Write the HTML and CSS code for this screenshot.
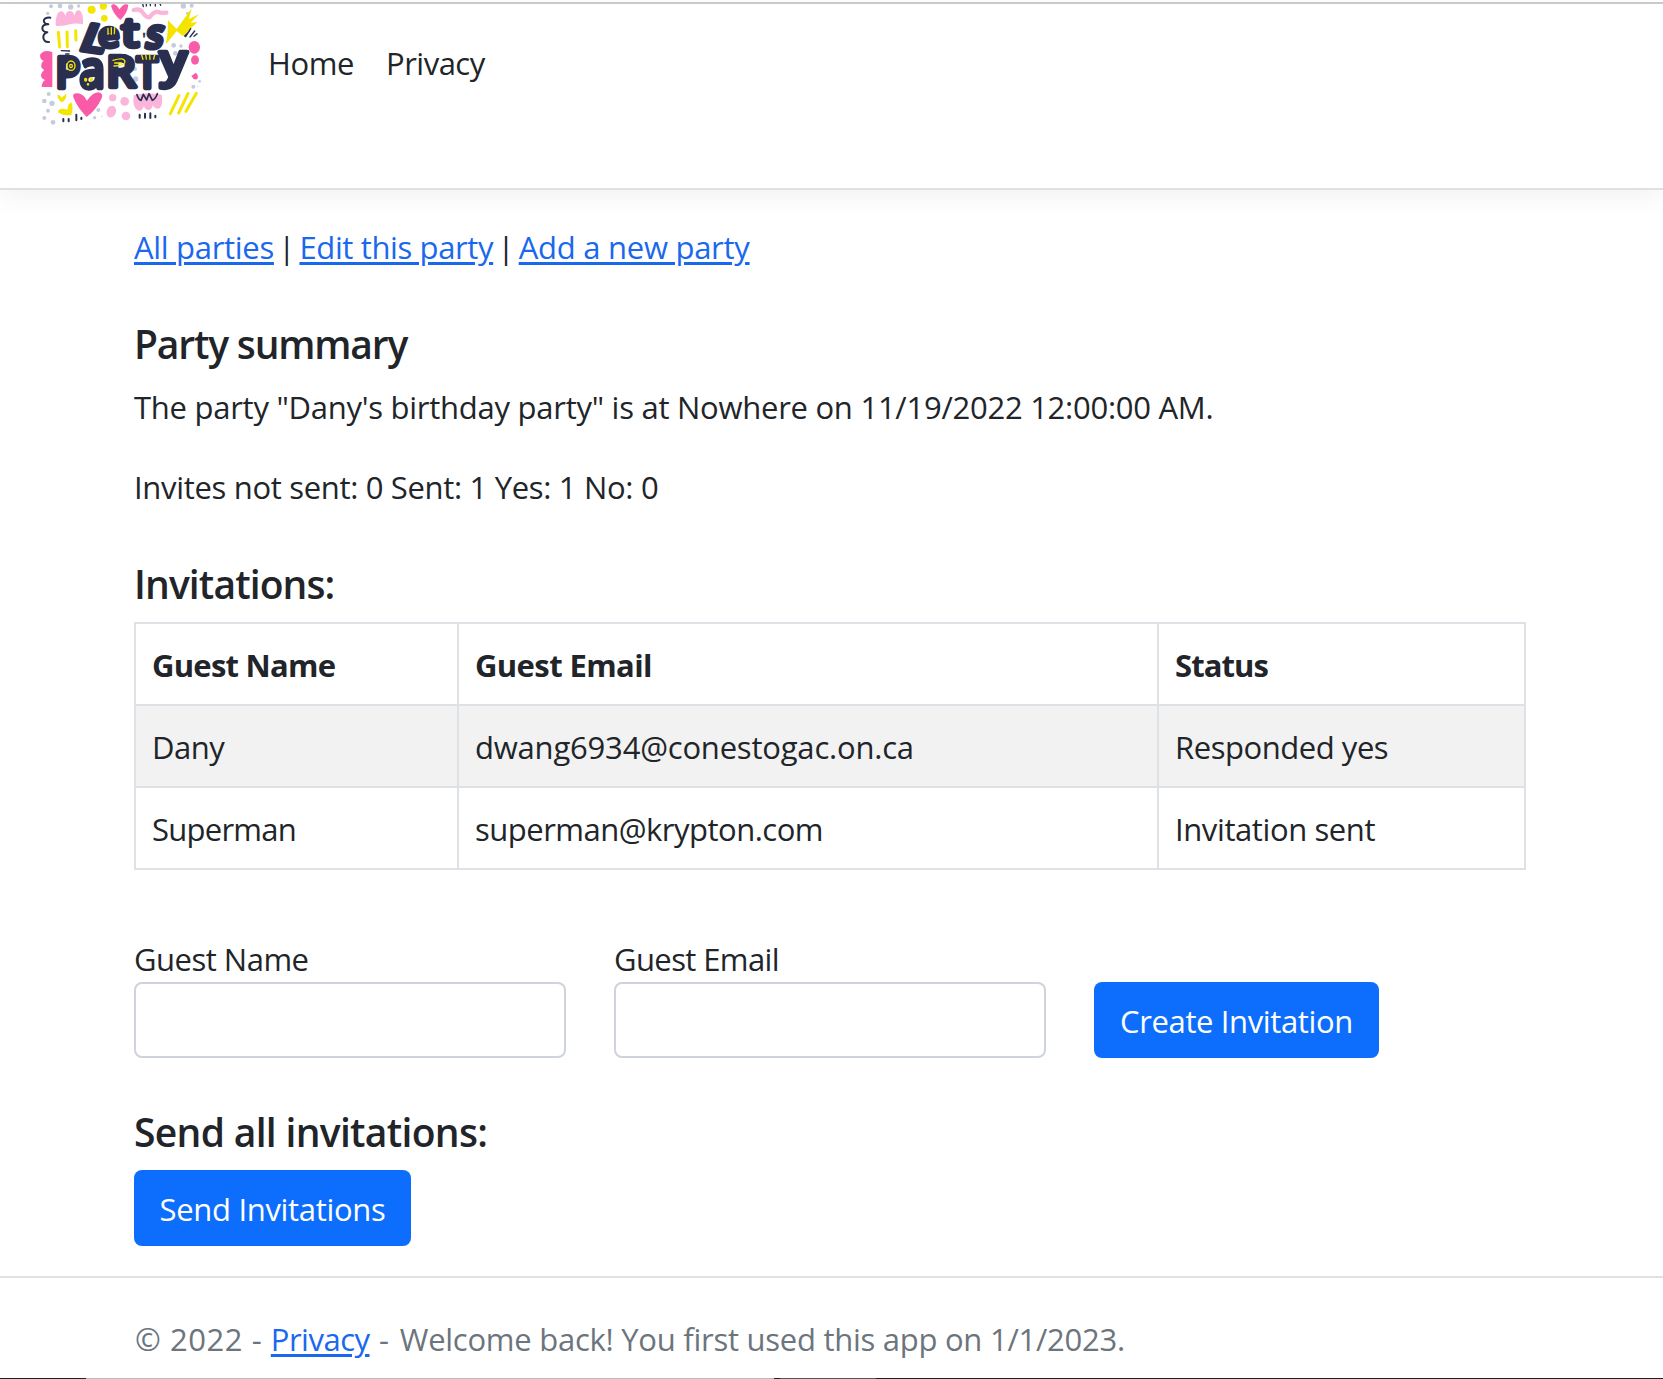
FILE: index.html
```html
<!DOCTYPE html>
<html lang="en">
<head>
<meta charset="utf-8">
<title>Party summary</title>
<link rel="stylesheet" href="styles.css">
</head>
<body>
<header class="navbar">
  <a class="brand" href="#" aria-label="Let's Party">
    <svg class="logo" viewBox="0 12 540 388" width="180" height="129.33">
      <g fill="#c3cbdc">
        <circle cx="63" cy="19" r="6"/><circle cx="90" cy="18" r="7"/><circle cx="122" cy="21" r="8"/><circle cx="146" cy="18" r="5"/><circle cx="53" cy="40" r="5"/>
        <circle cx="460" cy="18" r="8"/><circle cx="485" cy="17" r="6"/><circle cx="473" cy="40" r="5"/><circle cx="431" cy="136" r="7"/><circle cx="453" cy="138" r="5"/><circle cx="436" cy="160" r="7"/>
        <circle cx="315" cy="207" r="6"/><circle cx="297" cy="222" r="6"/><circle cx="317" cy="237" r="8"/><circle cx="509" cy="244" r="4"/><circle cx="490" cy="260" r="6"/><circle cx="503" cy="259" r="2"/>
        <circle cx="56" cy="282" r="6"/><circle cx="43" cy="303" r="7"/><circle cx="66" cy="310" r="8"/><circle cx="54" cy="332" r="6"/><circle cx="43" cy="354" r="6"/><circle cx="69" cy="367" r="7"/><circle cx="205" cy="330" r="6"/><circle cx="194" cy="353" r="5"/><circle cx="216" cy="349" r="2"/>
      </g>
      <g fill="#fcb5da">
        <path d="M77 77q-1-39 14-43 12-1 15 14 2-15 14-15 11 0 13 14 4-18 15-16 13 7 11 42-20-5-40 0-22 7-42 4z"/>
        <circle cx="248" cy="293" r="11"/><circle cx="284" cy="304" r="13"/><ellipse cx="244" cy="335" rx="14" ry="18" transform="rotate(20 244 335)"/><circle cx="288" cy="348" r="13"/>
        <path d="M311 286q42-12 84-2 6 43-14 42-9-1-12-10-5 16-15 14-10-2-12-13-5 17-18 15-18-9-13-46z"/>
      </g>
      <path fill="none" stroke="#fcb5da" stroke-width="13" stroke-linecap="round" stroke-linejoin="round" d="M311 30q18-5 26 6 10 17 22 16 10-15 22-17 12 5 28 3"/>
      <g fill="#fa5ba9">
        <path d="M243 17q11-12 25 11 13-20 27-14-2 25-24 46-21-18-28-43z"/>
        <path d="M67 157v104H35q0-14 10-21-13-5-12-15 0-8 10-15-11-5-9-16 0-7 7-11-14-6-10-20 13-17 36-6z"/>
        <path d="M131 294q-7-14 11-14 18 1 29 22 17-25 36-25 15 5 7 20-14 31-44 54-27-27-39-57z"/>
        <ellipse cx="493" cy="142" rx="17" ry="19"/><ellipse cx="495" cy="180" rx="12" ry="14"/><path d="M484 228l14-10q8 10 5 17-9 10-19-7z"/>
      </g>
      <g fill="#f3e500">
        <circle cx="185" cy="29" r="12"/><circle cx="220" cy="18" r="11"/><circle cx="223" cy="55" r="10"/>
        <path d="M414 61l26 26 45-62-8 32 30-14-25 25 20-2q-25 25-43 43l-19-16-32 40 5-38z"/>
        <path d="M82 283q10 4 13 10l14-12q1 18-14 26-13-9-13-24z"/><path d="M115 314l9-8q7 22 0 39-26 3-40-8 1-16 28-8z"/>
      </g>
      <g fill="none" stroke="#f3e500" stroke-width="9" stroke-linecap="round">
        <path d="M85 97l4 44M111 96l1 44M137 92l1 28M447 287l-26 54M474 281l-28 58M499 280l-31 54"/>
      </g>
      <g fill="none" stroke="#2a2f50" stroke-width="6" stroke-linecap="round" stroke-linejoin="round">
        <path d="M61 53c-28-2-22 21-6 20-25 0-22 24-3 24-19 6-14 31 5 29"/>
        <path stroke-width="4" d="M94 152l25 1M107 162h10M338 11l2 9M349 11v7M361 11v6M376 11v7M390 11l2 5M467 110l15-24M480 111l14-18M492 109l9-8M464 108l14-14"/>
        <path stroke-width="5" d="M321 284q4 14 12 17l7-18 10 17 7-19 10 20q10-5 15-20"/>
        <path d="M100 357v7M116 357v7M139 344v17M154 353v4M329 344v9M345 341v12M361 340v14M376 347v5"/>
      </g>
      <g class="lettering">
        <text transform="translate(142 149) rotate(8) skewX(-14)" font-size="116" textLength="76" lengthAdjust="spacingAndGlyphs">L</text>
        <text transform="translate(206 143) rotate(-4)" font-size="104" textLength="64" lengthAdjust="spacingAndGlyphs">e</text>
        <text x="274" y="142" font-size="118" textLength="54" lengthAdjust="spacingAndGlyphs">t</text>
        <text class="mark" x="336" y="136" font-size="50">'</text>
        <text transform="translate(342 145) skewX(-10)" font-size="120" textLength="54" lengthAdjust="spacingAndGlyphs">s</text>
        <text x="76" y="265" font-size="130" textLength="76" lengthAdjust="spacingAndGlyphs">P</text>
        <text x="148" y="264" font-size="158" textLength="78" lengthAdjust="spacingAndGlyphs">a</text>
        <text x="228" y="262" font-size="130" textLength="90" lengthAdjust="spacingAndGlyphs">R</text>
        <text x="319" y="265" font-size="128" textLength="66" lengthAdjust="spacingAndGlyphs">T</text>
        <text x="389" y="230" font-size="136" textLength="82" lengthAdjust="spacingAndGlyphs">y</text>
      </g>
      <g fill="none" stroke="#f3e500" stroke-width="4" stroke-linecap="round">
        <path d="M234 85v18M244 83v20M254 83l-1 18M335 165l4 13M347 164l2 13M359 165l1 13M374 165l-3 12M249 181q35-11 36 5-2 11-33 12M254 189h20"/>
        <ellipse cx="123" cy="197" rx="12" ry="14" fill="#2a2f50"/><ellipse cx="123" cy="198" rx="4" ry="5"/>
        <ellipse cx="167" cy="239" rx="3" ry="4" fill="#f3e500"/><ellipse cx="184" cy="238" rx="3" ry="4" fill="#f3e500"/><circle cx="174" cy="253" r="2"/>
      </g>
    </svg>
  </a>
  <nav class="nav-links"><a class="ls-40" href="#">Home</a><a class="ls-50" href="#">Privacy</a></nav>
</header>
<main class="container">
  <p class="actions"><a class="ls-30" href="#">All parties</a><span class="sep">|</span><a class="ls-37" href="#">Edit this party</a><span class="sep">|</span><a class="ls-25" href="#">Add a new party</a></p>
  <h5 class="h-summary">Party summary</h5>
  <p class="summary ls-25">The party "Dany's birthday party" is at Nowhere on 11/19/2022 12:00:00 AM.</p>
  <p class="counts ls-32">Invites not sent: 0 Sent: 1 Yes: 1 No: 0</p>
  <h5 class="h-invitations">Invitations:</h5>
  <table class="guests">
    <colgroup><col class="c-name"><col class="c-email"><col class="c-status"></colgroup>
    <thead><tr><th class="ls-75">Guest Name</th><th class="ls-60">Guest Email</th><th class="ls-90">Status</th></tr></thead>
    <tbody>
      <tr><td class="ls-50">Dany</td><td class="ls-20">dwang6934@conestogac.on.ca</td><td class="ls-45">Responded yes</td></tr>
      <tr><td class="ls-75">Superman</td><td class="ls-50">superman@krypton.com</td><td class="ls-40">Invitation sent</td></tr>
    </tbody>
  </table>
  <form class="invite">
    <div class="field"><label class="ls-50" for="guest-name">Guest Name</label><input id="guest-name" type="text"></div>
    <div class="field"><label class="ls-60" for="guest-email">Guest Email</label><input id="guest-email" type="text"></div>
    <button class="btn create ls-37" type="button">Create Invitation</button>
  </form>
  <h5 class="h-send">Send all invitations:</h5>
  <button class="btn send ls-32" type="button">Send Invitations</button>
</main>
<footer class="footer"><p class="ls-25"><span class="copyright">© 2022 - </span><a class="ls-50" href="#">Privacy</a><span class="dash"> - </span>Welcome back! You first used this app on 1/1/2023.</p></footer>
<div class="taskbar"></div>
</body>
</html>
```
FILE: styles.css
```css
* { box-sizing: border-box; }
body {
  margin: 0;
  width: 1663px;
  height: 1379px;
  overflow: hidden;
  display: flex;
  flex-direction: column;
  background: #fff;
  color: #212529;
  font: 400 31px/48px "Open Sans", "Noto Sans", sans-serif;
}
p, h5 { margin: 0; }
a { color: #1a68ee; text-decoration-thickness: 3px; text-underline-offset: 3px; }

/* Letter-spacing steps */
.ls-20 { letter-spacing: -.2px; }
.ls-25 { letter-spacing: -.26px; }
.ls-30 { letter-spacing: -.3px; }
.ls-32 { letter-spacing: -.32px; }
.ls-37 { letter-spacing: -.37px; }
.ls-40 { letter-spacing: -.4px; }
.ls-45 { letter-spacing: -.45px; }
.ls-50 { letter-spacing: -.5px; }
.ls-60 { letter-spacing: -.6px; }
.ls-75 { letter-spacing: -.75px; }
.ls-90 { letter-spacing: -.9px; }

.navbar {
  flex: none;
  height: 188px;
  margin-top: 2px;
  display: flex;
  align-items: flex-start;
  border-top: 2px solid #c9cacc;
  border-bottom: 2px solid #dee2e6;
  box-shadow: 0 8px 24px rgba(0, 0, 0, .05);
}
.brand { flex: none; width: 180px; margin-left: 30px; }
.logo { display: block; overflow: hidden; }
.lettering {
  fill: #2a2f50;
  stroke: #2a2f50;
  stroke-width: 13;
  stroke-linejoin: round;
  font-family: "Open Sans", sans-serif;
  font-weight: 600;
}
.mark { stroke-width: 1; }
.nav-links { display: flex; gap: 32px; margin: 35px 0 0 58px; }
.nav-links a { color: #212529; text-decoration: none; }
.container { flex: none; width: 1392px; margin: 0 0 0 134px; height: 1086px; padding-top: 33px; }
.actions { display: flex; }
.sep { width: 25.5px; text-align: center; }
h5 { font-size: 39px; font-weight: 600; line-height: 48px; }
.h-summary { margin-top: 49px; letter-spacing: -1.17px; }
.summary { margin-top: 15px; }
.counts { margin-top: 32px; }
.h-invitations { margin-top: 49px; letter-spacing: -.88px; }
.guests { width: 1392px; margin-top: 14px; table-layout: fixed; border-collapse: collapse; }
.c-name { width: 323px; }
.c-email { width: 700px; }
.guests th, .guests td { height: 82px; padding: 1px 16px 0; border: 2px solid #dee2e6; text-align: left; }
.guests th { font-weight: 700; }
.guests tbody tr:first-child { background: #f2f2f2; }
.invite { display: flex; align-items: flex-end; gap: 48px; margin-top: 66px; }
.field { width: 432px; }
.field label { display: block; line-height: 46px; }
.field input { display: block; width: 432px; height: 76px; border: 2px solid #ced4da; border-radius: 8px; background: #fff; }
.btn { display: block; height: 76px; padding: 2px 0 0; border: 0; border-radius: 8px; background: #0d6efd; color: #fff; font: inherit; text-align: center; white-space: nowrap; }
.create { width: 285px; letter-spacing: -.37px; }
.send { width: 277px; margin-top: 14px; letter-spacing: -.32px; }
.h-send { margin-top: 50px; letter-spacing: -.68px; }
.footer { flex: none; height: 102px; padding: 37px 0 0 135px; border-top: 2px solid #dee2e6; color: #6c757d; white-space: nowrap; }
.copyright { letter-spacing: .55px; }
.dash { letter-spacing: 1.4px; }
.taskbar { flex: none; height: 1px; background: linear-gradient(90deg, #222 86px, #bbb 86px 774px, #222 774px 780px, #555 780px 876px, #222 876px); }
```
